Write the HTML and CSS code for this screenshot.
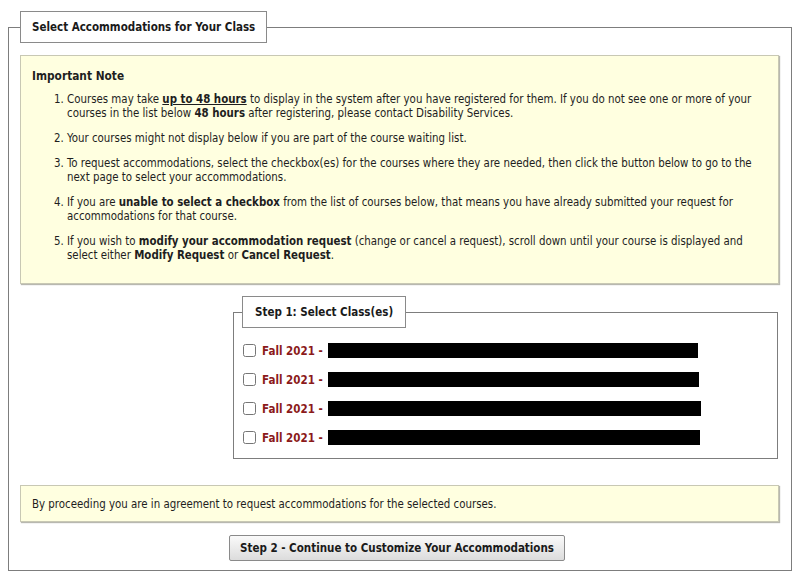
FILE: index.html
```html
<!DOCTYPE html>
<html>
<head>
<meta charset="utf-8">
<title>Select Accommodations</title>
<link rel="stylesheet" href="styles.css">
</head>
<body>
<fieldset class="main">
  <legend class="main-legend">Select Accommodations for Your Class</legend>
  <div class="note">
    <div class="note-title">Important Note</div>
    <ol class="note-list">
      <li>Courses may take <b><u>up to 48 hours</u></b> to display in the system after you have registered for them. If you do not see one or more of your courses in the list below <b>48 hours</b> after registering, please contact Disability Services.</li>
      <li>Your courses might not display below if you are part of the course waiting list.</li>
      <li>To request accommodations, select the checkbox(es) for the courses where they are needed, then click the button below to go to the next page to select your accommodations.</li>
      <li>If you are <b>unable to select a checkbox</b> from the list of courses below, that means you have already submitted your request for accommodations for that course.</li>
      <li>If you wish to <b>modify your accommodation request</b> (change or cancel a request), scroll down until your course is displayed and select either <b>Modify Request</b> or <b>Cancel Request</b>.</li>
    </ol>
  </div>
  <fieldset class="step">
    <legend class="step-legend">Step 1: Select Class(es)</legend>
    <label class="row"><input type="checkbox" class="chk"><span class="term">Fall 2021 -</span><span class="redact" style="width:370px"></span></label>
    <label class="row"><input type="checkbox" class="chk"><span class="term">Fall 2021 -</span><span class="redact" style="width:371px"></span></label>
    <label class="row"><input type="checkbox" class="chk"><span class="term">Fall 2021 -</span><span class="redact" style="width:373px"></span></label>
    <label class="row"><input type="checkbox" class="chk"><span class="term">Fall 2021 -</span><span class="redact" style="width:372px"></span></label>
  </fieldset>
  <div class="agree">By proceeding you are in agreement to request accommodations for the selected courses.</div>
  <div class="actions">
    <button class="btn" type="button">Step 2 - Continue to Customize Your Accommodations</button>
  </div>
</fieldset>
</body>
</html>
```

FILE: styles.css
```css
html, body {
  margin: 0;
  padding: 0;
  background: #ffffff;
}
body {
  font-family: "DejaVu Sans Condensed", "DejaVu Sans", Tahoma, sans-serif;
  font-size: 11.4px;
  color: #1e1e1e;
}
.main {
  margin: 11px 8px 0 8px;
  padding: 12px 12px 9px 11px;
  border: 1px solid #7d7d7d;
  min-width: 0;
}
.main-legend {
  padding: 0 11px;
  height: 32px;
  box-sizing: border-box;
  line-height: 30px;
  border: 1px solid #8a8a8a;
  background: #fff;
  font-weight: bold;
  font-size: 11.5px;
  color: #1a1a1a;
}
.note {
  background: #ffffe0;
  border: 1px solid #c8c8b4;
  box-shadow: 1px 1px 1px #b8b8b0;
  padding: 13px 11px 21px 11px;
}
.note-title {
  font-weight: bold;
  font-size: 11.8px;
  line-height: 14px;
}
.note-list {
  margin: 9px 0 0 0;
  padding-left: 35px;
}
.note-list li {
  line-height: 14px;
  margin-bottom: 11px;
}
.note-list li:last-child {
  margin-bottom: 0;
}
.step {
  width: 545px;
  box-sizing: border-box;
  margin: 12px 1px 0 auto;
  padding: 8px 8px 6px 8px;
  border: 1px solid #7d7d7d;
  min-width: 0;
}
.step-legend {
  padding: 0 12px;
  height: 32px;
  box-sizing: border-box;
  line-height: 30px;
  border: 1px solid #8a8a8a;
  background: #fff;
  font-weight: bold;
  font-size: 11.5px;
  color: #1a1a1a;
}
.row {
  display: flex;
  align-items: center;
  height: 29px;
}
.chk {
  width: 13px;
  height: 13px;
  margin: 0 6px 0 1px;
}
.term {
  color: #8b1a1a;
  font-weight: bold;
  font-size: 11.5px;
}
.redact {
  display: inline-block;
  height: 15px;
  background: #000;
  margin-left: 5px;
}
.agree {
  margin-top: 26px;
  background: #ffffe0;
  border: 1px solid #c8c8b4;
  box-shadow: 1px 1px 1px #b8b8b0;
  padding: 11px 11px 10px 11px;
  line-height: 14px;
}
.actions {
  display: flex;
  justify-content: center;
  margin-top: 13px;
  padding-right: 5px;
}
.btn {
  height: 26px;
  padding: 0 10px;
  border: 1px solid #8a8a8a;
  border-radius: 2px;
  background: linear-gradient(#fafafa, #dcdcdc);
  font-family: "DejaVu Sans Condensed", "DejaVu Sans", Tahoma, sans-serif;
  font-weight: bold;
  font-size: 11.5px;
  color: #1a1a1a;
}
```
